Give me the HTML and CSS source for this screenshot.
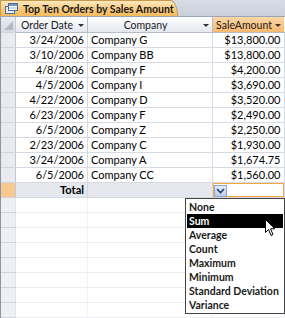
FILE: index.html
```html
<!DOCTYPE html>
<html lang="en">
<head>
    <meta charset="UTF-8">
    <title>Top Ten Orders by Sales Amount</title>
    <link rel="stylesheet" href="styles.css">
</head>
<body>

    <div class="tabbar">
        <div class="tab">
            <svg class="tab-icon" width="13" height="11" viewBox="0 0 13 11">
                <rect x="0.5" y="3.5" width="9" height="7" fill="#e9eef6" stroke="#4a6d9c"/>
                <rect x="3.5" y="0.5" width="9" height="7" fill="#ffffff" stroke="#4a6d9c"/>
                <rect x="4" y="1" width="8" height="2" fill="#6f97cc"/>
                <line x1="4" y1="5" x2="12" y2="5" stroke="#9bb3d4"/>
            </svg>
            <span>Top Ten Orders by Sales Amount</span>
        </div>
    </div>

    <div class="sheet">
        <table class="grid">
            <thead>
                <tr>
                    <th class="sel corner"><span class="corner-mark"></span></th>
                    <th class="col-date">Order Date <span class="arrow"></span></th>
                    <th class="col-company">Company <span class="arrow"></span></th>
                    <th class="col-amount active">SaleAmount <span class="arrow"></span></th>
                </tr>
            </thead>
            <tbody>
                <tr><td class="sel"></td><td class="num">3/24/2006</td><td>Company G</td><td class="num">$13,800.00</td></tr>
                <tr><td class="sel"></td><td class="num">3/10/2006</td><td>Company BB</td><td class="num">$13,800.00</td></tr>
                <tr><td class="sel"></td><td class="num">4/8/2006</td><td>Company F</td><td class="num">$4,200.00</td></tr>
                <tr><td class="sel"></td><td class="num">4/5/2006</td><td>Company I</td><td class="num">$3,690.00</td></tr>
                <tr><td class="sel"></td><td class="num">4/22/2006</td><td>Company D</td><td class="num">$3,520.00</td></tr>
                <tr><td class="sel"></td><td class="num">6/23/2006</td><td>Company F</td><td class="num">$2,490.00</td></tr>
                <tr><td class="sel"></td><td class="num">6/5/2006</td><td>Company Z</td><td class="num">$2,250.00</td></tr>
                <tr><td class="sel"></td><td class="num">2/23/2006</td><td>Company C</td><td class="num">$1,930.00</td></tr>
                <tr><td class="sel"></td><td class="num">3/24/2006</td><td>Company A</td><td class="num">$1,674.75</td></tr>
                <tr><td class="sel"></td><td class="num">6/5/2006</td><td>Company CC</td><td class="num">$1,560.00</td></tr>
                <tr class="total">
                    <td class="sel"></td>
                    <td class="num"><b>Total</b></td>
                    <td></td>
                    <td class="total-cell">
                        <span class="drop-btn">
                            <svg width="9" height="6" viewBox="0 0 9 6"><path d="M1 1 L4.5 4.5 L8 1" fill="none" stroke="#1f3f73" stroke-width="1.6"/></svg>
                        </span>
                        <!-- Daftar fungsi total -->
                        <ul class="drop-list">
                            <li>None</li>
                            <li class="picked">Sum</li>
                            <li>Average</li>
                            <li>Count</li>
                            <li>Maximum</li>
                            <li>Minimum</li>
                            <li>Standard Deviation</li>
                            <li>Variance</li>
                        </ul>
                        <svg class="cursor" width="12" height="18" viewBox="0 0 12 18">
                            <path d="M0.5 0.5 L0.5 13.5 L3.5 10.5 L6 16.5 L8 15.5 L5.5 9.8 L9.8 9.8 Z" fill="#ffffff" stroke="#000000" stroke-width="1"/>
                        </svg>
                    </td>
                </tr>
                <tr class="blank"><td class="sel"></td><td></td><td></td><td></td></tr>
                <tr class="blank"><td class="sel"></td><td></td><td></td><td></td></tr>
                <tr class="blank"><td class="sel"></td><td></td><td></td><td></td></tr>
                <tr class="blank"><td class="sel"></td><td></td><td></td><td></td></tr>
                <tr class="blank"><td class="sel"></td><td></td><td></td><td></td></tr>
                <tr class="blank"><td class="sel"></td><td></td><td></td><td></td></tr>
                <tr class="blank"><td class="sel"></td><td></td><td></td><td></td></tr>
                <tr class="blank"><td class="sel"></td><td></td><td></td><td></td></tr>
                <tr class="blank"><td class="sel"></td><td></td><td></td><td></td></tr>
            </tbody>
        </table>
    </div>

</body>
</html>
```

FILE: styles.css
```css
body {
    margin: 0;
    padding: 0;
    background: #ffffff;
    font-family: Lato, "Open Sans", sans-serif;
    font-size: 11px;
    color: #000;
    overflow: hidden;
}

/* Bagian tab */
.tabbar {
    height: 16px;
    background: linear-gradient(#d6dce5, #c9d0da);
    border-bottom: 1px solid #9aa6b8;
    display: flex;
    align-items: flex-end;
}

.tab {
    height: 15px;
    width: 172px;
    padding-left: 4px;
    display: flex;
    align-items: center;
    gap: 5px;
    background: linear-gradient(#fde8bd, #f8c878 60%, #f6bb5c);
    border: 1px solid #c99a4a;
    border-bottom: none;
    border-top-right-radius: 8px 15px;
    font-weight: bold;
    font-size: 10.5px;
    color: #1a1a1a;
    white-space: nowrap;
}

.tab-icon {
    flex: none;
}

/* Bagian tabel */
.sheet {
    border-left: 1px solid #8a95a6;
    height: 302px;
}

.grid {
    border-collapse: collapse;
    table-layout: fixed;
    width: 283px;
}

.grid th, .grid td {
    height: 14px;
    padding: 0 3px;
    border-right: 1px solid #d5dae3;
    border-bottom: 1px solid #d5dae3;
    white-space: nowrap;
    overflow: visible;
    line-height: 14px;
}

.grid th {
    height: 15px;
    padding: 0 10px 0 1px;
    font-weight: normal;
    text-align: center;
    color: #1a1a1a;
    background: linear-gradient(#ffffff, #e3e7ee);
    border-right: 1px solid #b5bdca;
    border-bottom: 1px solid #b5bdca;
    position: relative;
    font-size: 10.5px;
}

.grid th.active {
    background: linear-gradient(#fbd7a8, #f7b96f);
    border-right: none;
}

.grid th .arrow {
    position: absolute;
    right: 3px;
    top: 7px;
    border-left: 3px solid transparent;
    border-right: 3px solid transparent;
    border-top: 3px solid #333;
}

.col-date {
    width: 60px;
}

.col-company {
    width: 113px;
}

.col-amount {
    width: 60px;
}

.grid .sel {
    width: 8px;
    background: #e9ebf0;
    border-right: 1px solid #c4cad5;
    border-bottom: 1px solid #d0d5de;
}

.grid th.sel {
    padding: 0 3px;
}

.grid th.corner {
    background: linear-gradient(#e9ecf1, #d7dce4);
}

.corner-mark {
    position: absolute;
    right: 2px;
    bottom: 2px;
    border-left: 9px solid transparent;
    border-bottom: 9px solid #b3bac6;
}

.grid td.num {
    text-align: right;
}

.total td {
    background: #e5e8ee;
}

.total td.sel {
    background: #f8c98e;
}

.total td.total-cell {
    background: #ffffff;
    position: relative;
    box-shadow: inset 0 0 0 1px #f4a93c;
}

.drop-btn {
    display: inline-flex;
    align-items: center;
    justify-content: center;
    width: 11px;
    height: 10px;
    margin-top: 2px;
    margin-left: -2px;
    background: linear-gradient(#e3ecf8, #b9cde6);
    border: 1px solid #8ea6c8;
    vertical-align: top;
}

.drop-list {
    position: absolute;
    list-style: none;
    margin: 0;
    padding: 1px;
    left: -28px;
    top: 15px;
    width: 96px;
    background: #fff;
    border: 1px solid #444;
    z-index: 10;
}

.drop-list li {
    height: 14px;
    line-height: 14px;
    padding-left: 2px;
    font-weight: bold;
    font-size: 10.5px;
    color: #1a1a1a;
}

.drop-list li.picked {
    background: #000;
    color: #fff;
}

.cursor {
    position: absolute;
    left: 52px;
    top: 36px;
    z-index: 11;
}

.blank td {
    background: #fff;
    border-right: 1px solid #eef0f3;
    border-bottom: 1px solid #eceef2;
}

.blank td.sel {
    background: #eef0f3;
    border-right: 1px solid #dfe3e9;
}
```
